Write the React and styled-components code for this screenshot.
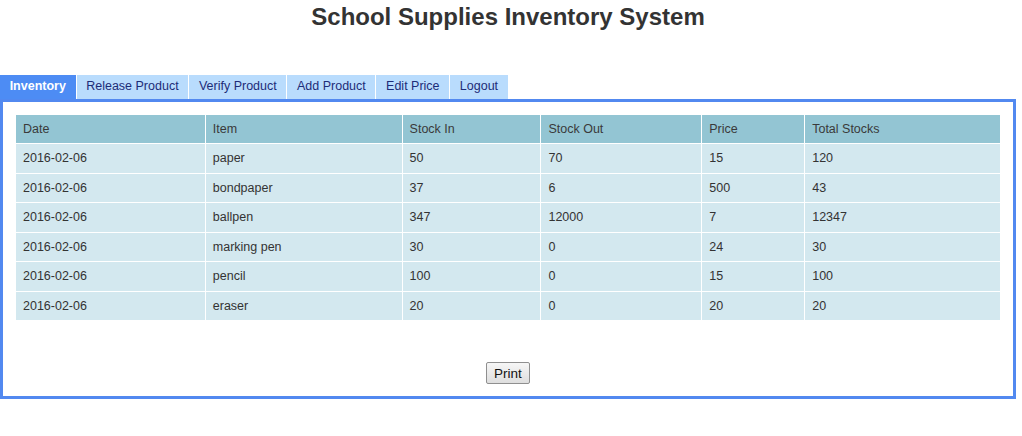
import React from "react";
import styled, { createGlobalStyle } from "styled-components";

const GlobalStyle = createGlobalStyle`
  body {
    margin: 0;
    background: #ffffff;
    font-family: "Liberation Sans", Arial, sans-serif;
  }
`;

const Page = styled.div`
  width: 1016px;
`;

const Title = styled.h1`
  margin: 0;
  padding-top: 3px;
  height: 72px;
  text-align: center;
  font-size: 24px;
  font-weight: bold;
  color: #333333;
`;

const Tabs = styled.ul`
  display: flex;
  gap: 1px;
  margin: 0;
  padding: 0;
  list-style: none;
  height: 24px;
`;

const Tab = styled.li`
  padding: 0 9.65px;
  line-height: 23px;
  font-size: 12.5px;
  font-weight: ${({ active }) => (active ? "bold" : "normal")};
  color: ${({ active }) => (active ? "#ffffff" : "#1d2c78")};
  background: ${({ active }) => (active ? "#4d8cf4" : "#b9dcfd")};
  cursor: pointer;
`;

const Panel = styled.div`
  border: 3px solid #5289f0;
  padding: 13px 12px 12px 12px;
`;

const Table = styled.table`
  width: 986px;
  border-collapse: collapse;
  font-size: 12.5px;
  color: #333333;
`;

const Th = styled.th`
  width: ${({ w }) => w}px;
  height: 28px;
  padding: 0 7px;
  text-align: left;
  font-weight: normal;
  background: #93c5d3;
  border: 1px solid #ffffff;
  border-top: none;
  color: #3a3a3a;
`;

const Td = styled.td`
  height: 28.5px;
  padding: 0 7px;
  background: #d3e8ef;
  border: 1px solid #ffffff;
`;

const Footer = styled.div`
  display: flex;
  justify-content: center;
  padding-top: 41px;
`;

const PrintButton = styled.button`
  font-family: "Liberation Sans", Arial, sans-serif;
  font-size: 13.5px;
  color: #111111;
  height: 22px;
  padding: 0 7px;
  border: 1px solid #8f8f8f;
  border-radius: 2px;
  background: linear-gradient(#f6f6f6, #dedede);
  cursor: pointer;
`;

const tabs = [
  "Inventory",
  "Release Product",
  "Verify Product",
  "Add Product",
  "Edit Price",
  "Logout",
];

const columns = [
  { label: "Date", w: 190 },
  { label: "Item", w: 197 },
  { label: "Stock In", w: 139 },
  { label: "Stock Out", w: 161 },
  { label: "Price", w: 103 },
  { label: "Total Stocks", w: 196 },
];

const rows = [
  ["2016-02-06", "paper", 50, 70, 15, 120],
  ["2016-02-06", "bondpaper", 37, 6, 500, 43],
  ["2016-02-06", "ballpen", 347, 12000, 7, 12347],
  ["2016-02-06", "marking pen", 30, 0, 24, 30],
  ["2016-02-06", "pencil", 100, 0, 15, 100],
  ["2016-02-06", "eraser", 20, 0, 20, 20],
];

export default function App() {
  return (
    <Page>
      <GlobalStyle />
      <Title>School Supplies Inventory System</Title>
      <Tabs>
        {tabs.map((t, i) => (
          <Tab key={t} active={i === 0}>
            {t}
          </Tab>
        ))}
      </Tabs>
      <Panel>
        <Table>
          <thead>
            <tr>
              {columns.map((c) => (
                <Th key={c.label} w={c.w - 15}>
                  {c.label}
                </Th>
              ))}
            </tr>
          </thead>
          <tbody>
            {rows.map((r, i) => (
              <tr key={i}>
                {r.map((v, j) => (
                  <Td key={j}>{v}</Td>
                ))}
              </tr>
            ))}
          </tbody>
        </Table>
        <Footer>
          <PrintButton>Print</PrintButton>
        </Footer>
      </Panel>
    </Page>
  );
}
